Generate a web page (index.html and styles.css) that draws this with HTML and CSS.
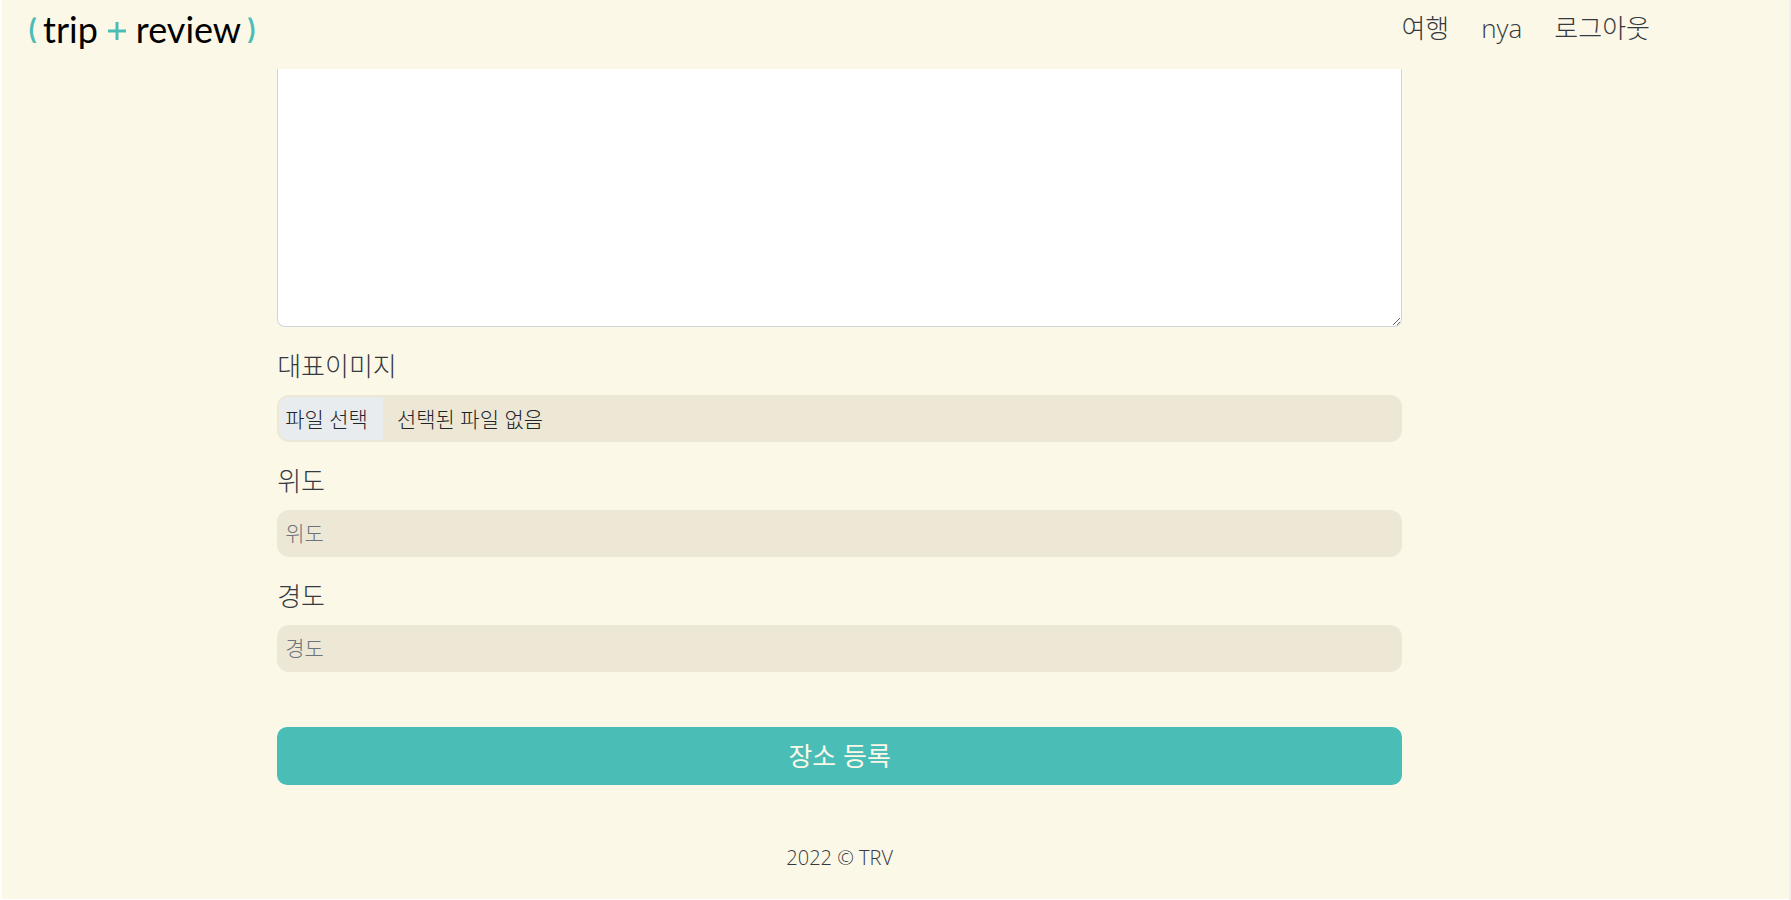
FILE: index.html
```html
<!DOCTYPE html>
<html lang="ko">
<head>
<meta charset="utf-8">
<title>trip + review</title>
<link rel="stylesheet" href="styles.css">
</head>
<body>
<div class="page">
  <header class="header">
    <a class="logo" href="#"><span class="logo-mark">(</span><span>trip</span><svg class="logo-plus" viewBox="0 0 18 18" aria-label="+"><path d="M9 0v18M0 9h18"/></svg><span>review</span><span class="logo-mark logo-close">)</span></a>
    <nav class="nav">
      <a href="#">여행</a>
      <a href="#">nya</a>
      <a href="#">로그아웃</a>
    </nav>
  </header>
  <main class="content">
    <form class="form">
      <textarea class="description" aria-label="내용"></textarea>
      <div class="field">
        <label class="label" for="image">대표이미지</label>
        <label class="control file" for="image">
          <input class="file-input" id="image" type="file">
          <span class="file-button">파일 선택</span>
          <span class="file-name">선택된 파일 없음</span>
        </label>
      </div>
      <div class="field">
        <label class="label" for="latitude">위도</label>
        <input class="control" id="latitude" type="text" placeholder="위도">
      </div>
      <div class="field">
        <label class="label" for="longitude">경도</label>
        <input class="control" id="longitude" type="text" placeholder="경도">
      </div>
      <button class="submit" type="submit">장소 등록</button>
    </form>
    <footer class="footer">2022 © TRV</footer>
  </main>
</div>
</body>
</html>
```
FILE: styles.css
```css
* {
  box-sizing: border-box;
}

body {
  margin: 0;
  padding: 0 0 1px 2px;
  border-right: 2px solid #f0f0f0;
  background: #fff;
  color: #343a40;
  font-family: "Open Sans", "Noto Sans CJK KR", sans-serif;
  font-weight: 300;
}

.page {
  min-height: calc(100vh - 1px);
  background: #fcf8e8;
}

.header {
  display: flex;
  align-items: flex-start;
  justify-content: space-between;
  height: 69px;
  padding: 0 139px 0 25px;
}

.logo {
  display: flex;
  align-items: center;
  height: 58px;
  color: #000;
  font-family: Lato, sans-serif;
  font-size: 36px;
  font-weight: 400;
  line-height: 58px;
  text-decoration: none;
}

.logo-mark {
  width: 16px;
  color: #4abdb6;
  font-family: Inter, sans-serif;
  font-size: 28px;
  font-weight: 500;
}

.logo-close {
  text-align: right;
}

.logo-plus {
  width: 18px;
  height: 18px;
  margin: 4px 10px 0;
  fill: none;
  stroke: #4abdb6;
  stroke-width: 3;
}

.nav {
  display: flex;
  gap: 32px;
}

.nav a {
  color: inherit;
  font-size: 26px;
  line-height: 56px;
  text-decoration: none;
}

.content {
  width: 62.95%;
  margin-left: 15.4%;
}

.form {
  display: flex;
  flex-direction: column;
}

.description {
  display: block;
  width: 100%;
  height: 258px;
  border: 1px solid #ced4da;
  border-top: 0;
  border-radius: 0 0 8px 8px;
  background: #fff;
  font: inherit;
  outline: none;
  resize: vertical;
}

.field {
  display: flex;
  flex-direction: column;
  gap: 11px;
  padding-top: 21px;
}

.label {
  font-size: 26px;
  line-height: 36px;
}

.control {
  display: flex;
  align-items: center;
  width: 100%;
  height: 47px;
  padding: 1px 8px 3px;
  border: 0;
  border-radius: 12px;
  background: #ede8d6;
  color: #212529;
  font: inherit;
  font-size: 21px;
  line-height: 30px;
}

.control::placeholder {
  color: #6c757d;
  opacity: 1;
}

.file {
  gap: 14px;
  padding: 2px 8px 2px 2px;
}

.file-input {
  position: absolute;
  width: 1px;
  height: 1px;
  opacity: 0;
}

.file-button {
  display: flex;
  align-items: center;
  height: 43px;
  padding: 0 15px 0 6px;
  border-radius: 10px 0 0 10px;
  background: #e9ecef;
}

.submit {
  height: 58px;
  margin-top: 55px;
  padding: 0 0 2px;
  border: 0;
  border-radius: 10px;
  background: #4abdb6;
  color: #fcf8e8;
  font: inherit;
  font-size: 26px;
  font-weight: 400;
}

.footer {
  padding: 58px 0 26px;
  font-size: 20px;
  line-height: 30px;
  text-align: center;
}
```
